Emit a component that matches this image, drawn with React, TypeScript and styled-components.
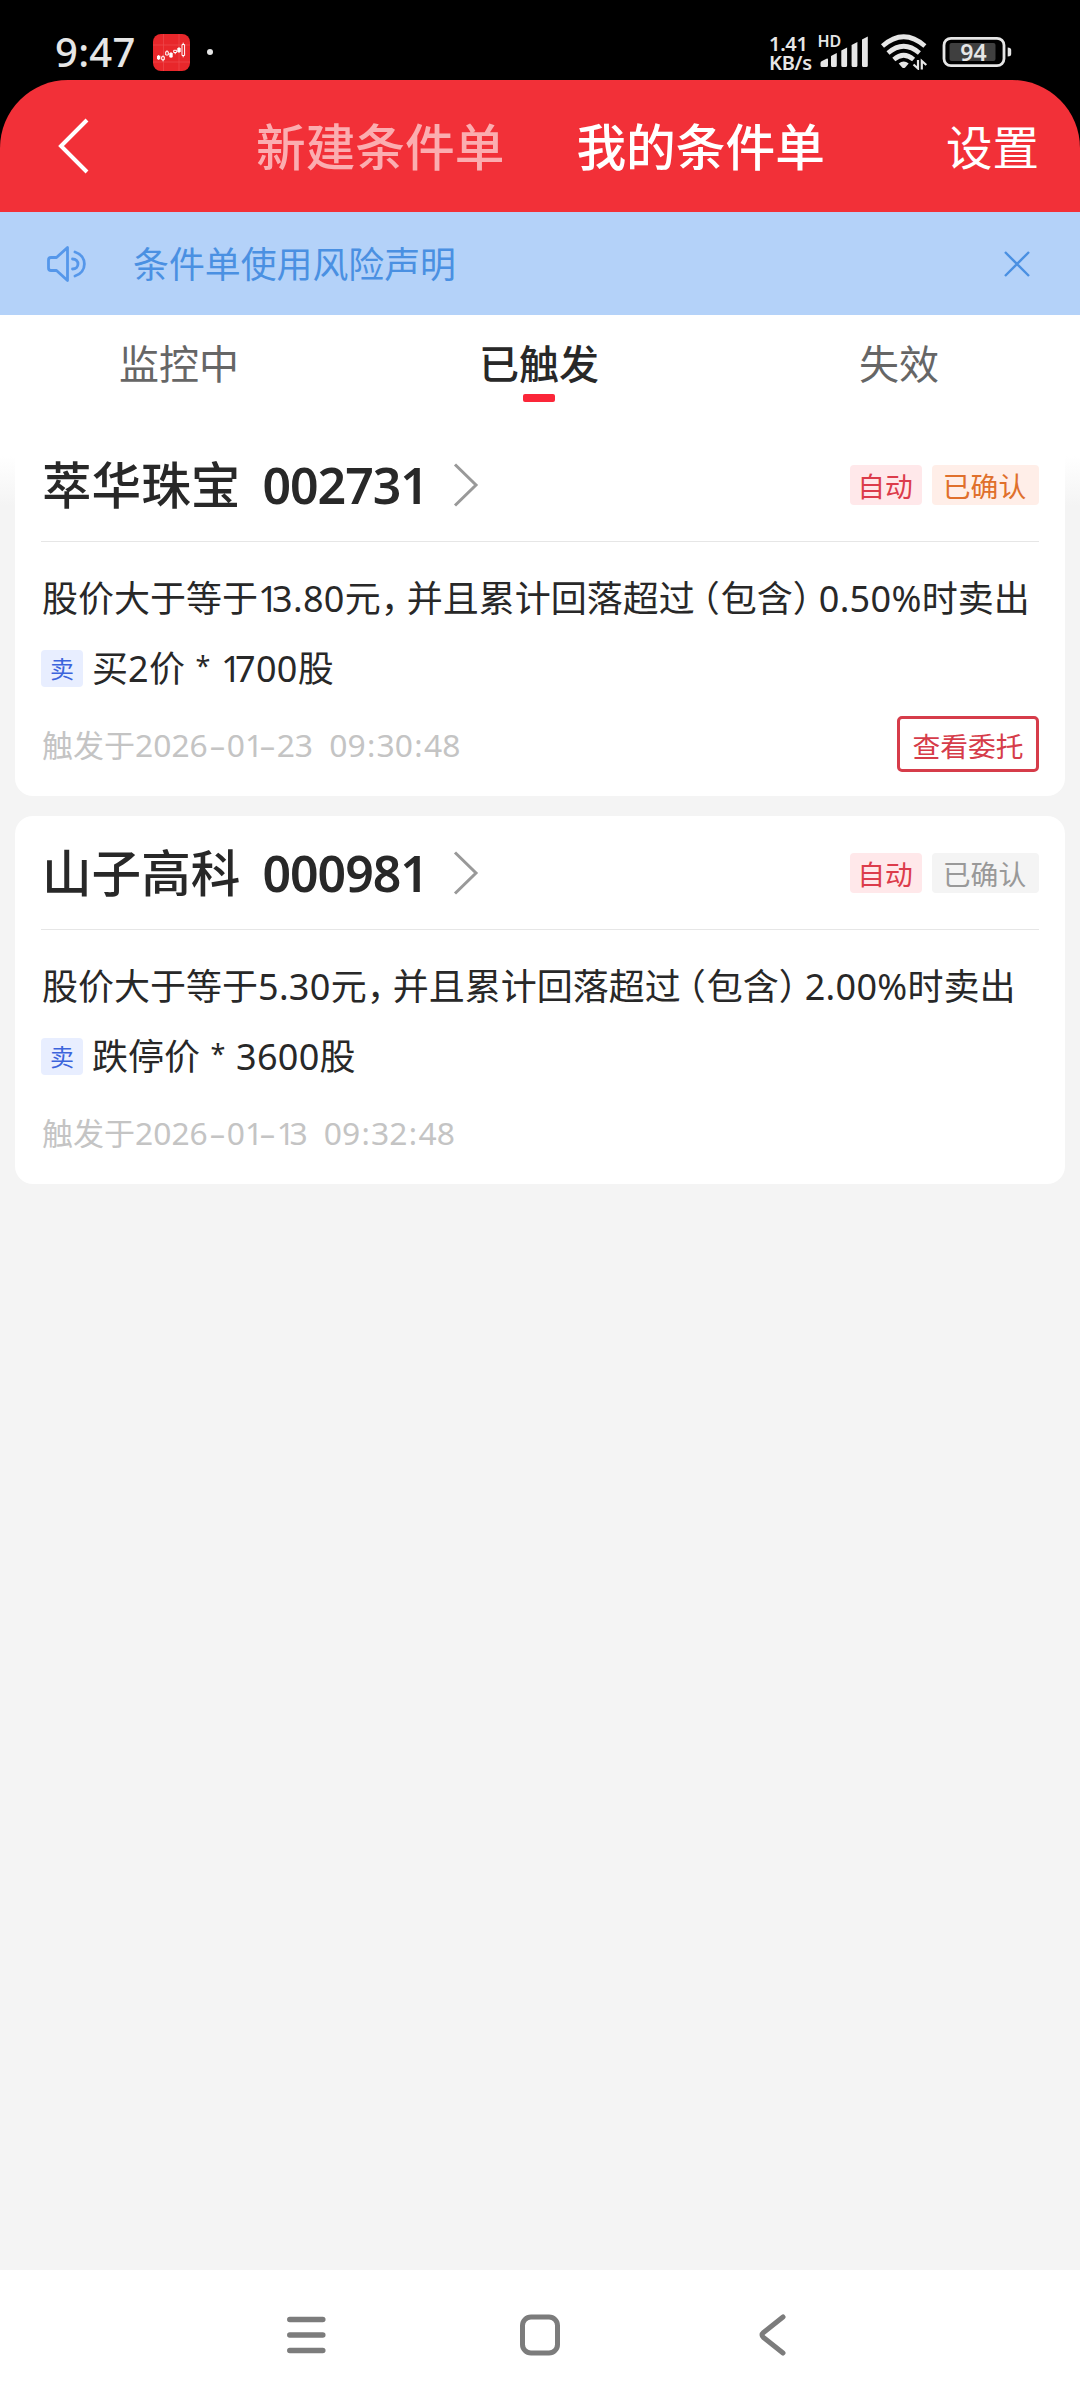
import React from "react";
import styled, { createGlobalStyle } from "styled-components";

const Global = createGlobalStyle`
  * { box-sizing: border-box; }
  body { margin: 0; background: #f4f4f4; }
`;

const Screen = styled.div`
  width: 1080px;
  height: 2400px;
  display: flex;
  flex-direction: column;
  background: #f4f4f4;
  overflow: hidden;
  font-family: "Noto Sans", "Noto Sans CJK SC", sans-serif;
  color: #282828;
  white-space: nowrap;
`;

const Top = styled.div`
  background: #000;
`;

const StatusBar = styled.div`
  height: 80px;
  display: flex;
  align-items: center;
  padding: 24px 68px 0 55px;
  color: #e6e6e6;
`;

const Clock = styled.span`
  width: 98px;
  font-size: 40px;
  font-weight: 500;
  line-height: 56px;
  letter-spacing: 0.3px;
`;

const Spacer = styled.div`
  flex: 1;
`;

const Speed = styled.div`
  display: flex;
  flex-direction: column;
  width: 47px;
  padding-top: 1px;
  font-size: 20px;
  line-height: 19px;
  font-weight: 600;
  letter-spacing: -0.3px;
`;

const Header = styled.div`
  height: 132px;
  display: flex;
  align-items: center;
  padding: 0 41px 0 56px;
  background: #f23038;
  border-radius: 68px 68px 0 0;
`;

const HeaderTabs = styled.div`
  display: flex;
  gap: 72px;
  margin-left: 167px;
  padding-top: 2px;
  flex: 1;
`;

const HeaderTab = styled.span<{ $active?: boolean }>`
  font-size: 49.7px;
  line-height: 72px;
  font-weight: 500;
  color: ${(p) => (p.$active ? "#fff" : "#fbadb0")};
`;

const Settings = styled.span`
  font-size: 46.5px;
  line-height: 72px;
  padding-top: 2px;
  color: #fff;
`;

const Notice = styled.div`
  height: 103px;
  display: flex;
  align-items: center;
  padding: 0 50px 0 45px;
  background: #b4d2f9;
  color: #4a90e2;
`;

const NoticeText = styled.span`
  flex: 1;
  margin-left: 46px;
  padding-top: 2px;
  font-size: 35.9px;
  line-height: 52px;
`;

const Tabs = styled.div`
  height: 113px;
  display: grid;
  grid-template-columns: repeat(3, 1fr);
  background: #fff;
`;

const Tab = styled.div<{ $active?: boolean }>`
  display: flex;
  flex-direction: column;
  align-items: center;
  padding: 19px 2px 0 0;
  font-size: 40px;
  line-height: 60px;
  font-weight: ${(p) => (p.$active ? 500 : 400)};
  color: ${(p) => (p.$active ? "#282828" : "#666")};
`;

const Indicator = styled.i`
  width: 32px;
  height: 8px;
  border-radius: 2px;
  background: #fb2639;
`;

const List = styled.div`
  flex: 1;
  display: flex;
  flex-direction: column;
  gap: 20px;
  padding: 0 15px;
  background: linear-gradient(#fff 28px, #f4f4f4 78px);
`;

const Card = styled.div`
  height: 368px;
  padding: 0 26px;
  border-radius: 18px;
  background: #fff;
`;

const CardHead = styled.div`
  height: 114px;
  display: flex;
  align-items: center;
  border-bottom: 1px solid #e6e6e6;
`;

const StockName = styled.span`
  font-size: 49.6px;
  line-height: 72px;
  font-weight: 500;
  margin: 0 22px 0 1px;
`;

const StockCode = styled.span`
  width: 166px;
  font-size: 50px;
  line-height: 72px;
  font-weight: 600;
  letter-spacing: -1px;
`;

const TagGroup = styled.div`
  display: flex;
  gap: 10px;
  margin-left: auto;
`;

const tones = {
  red: ["#ffe8ea", "#dc3c4b"],
  orange: ["#ffeee8", "#e0702c"],
  grey: ["#f4f4f4", "#999999"],
};

const Tag = styled.span<{ $tone: keyof typeof tones; $w: number }>`
  width: ${(p) => p.$w}px;
  height: 40px;
  border-radius: 4px;
  padding-right: 2px;
  text-align: center;
  font-size: 27.8px;
  line-height: 43px;
  background: ${(p) => tones[p.$tone][0]};
  color: ${(p) => tones[p.$tone][1]};
`;

const Condition = styled.div`
  margin-top: 31px;
  font-size: 36px;
  line-height: 52px;
  padding-left: 1px;
`;

const Digits = styled.span`
  letter-spacing: 0.3px;
`;

const One = styled.span`
  letter-spacing: -6.5px;
`;

const Mark = styled.span<{ $open: boolean }>`
  display: inline-block;
  width: 26px;
  padding: ${(p) => (p.$open ? "0 1px 0 0" : "0")};
  text-align: ${(p) => (p.$open ? "right" : "left")};
  font-feature-settings: "halt";
`;

const Order = styled.div`
  display: flex;
  align-items: center;
  gap: 9px;
  margin-top: 17px;
  height: 52px;
  font-size: 36px;
  line-height: 52px;
`;

const OrderText = styled.span`
  padding-top: 2px;
`;

const Star = styled.span`
  display: inline-block;
  width: 36px;
  text-align: center;
  font-size: 27px;
  line-height: 27px;
  vertical-align: 6px;
`;

const Side = styled.span`
  width: 42px;
  height: 37px;
  border-radius: 4px;
  background: #e8eeff;
  color: #3c64dc;
  font-size: 24px;
  line-height: 38px;
  text-align: center;
`;

const CardFoot = styled.div`
  display: flex;
  align-items: center;
  justify-content: space-between;
  height: 56px;
  margin-top: 22px;
`;

const Time = styled.span`
  font-size: 31px;
  line-height: 46px;
  color: #c4c4c4;
  padding: 1px 0 0 1px;
  white-space: pre;
`;

const TimeDigits = styled.span`
  font-size: 31.8px;
`;

const TimeOne = styled.span`
  font-size: 31.8px;
  letter-spacing: -5.5px;
`;

const Colon = styled.span`
  display: inline-block;
  width: 11px;
  text-align: center;
`;

const Dash = styled.span`
  display: inline-block;
  width: 19px;
  text-align: center;
  transform: scaleX(1.7);
`;

const OrderButton = styled.button`
  width: 142px;
  height: 56px;
  padding: 1px 0 0;
  border: 3px solid #d63c4a;
  border-radius: 5px;
  background: #fff;
  color: #d63c4a;
  font: 400 27.8px/48px "Noto Sans CJK SC", sans-serif;
`;

const NavBar = styled.div`
  height: 130px;
  display: flex;
  align-items: center;
  justify-content: space-between;
  padding: 0 288px 0 286px;
  background: #fff;
`;

function AppIcon() {
  return (
    <svg width="37" height="37" viewBox="0 0 37 37">
      <rect width="37" height="37" rx="8" fill="#e8272b" />
      <path d="M10.500 0v37M26 0v37M0 11h37M0 28h37" stroke="#ee4a4d" strokeWidth=".7" fill="none" />
      <g stroke="#fff" fill="none" strokeWidth="1">
        <path d="M5.700 21v5M10 21.500v1M10 26v1.300M14 16.300v1M18 18v6M22.200 18.700v1.500M26 13v6M30.200 8.700v1.600M30.200 21.700v1.600" />
        <path d="M8.700 22.700h2.600v3h-2.600zM12.700 17.700h2.600v3.300h-2.600zM20.700 16.300h3v2.200h-3zM29 10.500h2.600v11h-2.600z" />
      </g>
      <path d="M4 21.700h3.300v3.600H4zM16.300 19h3.400v4.300h-3.400zM24.300 14h3.400v4h-3.400z" fill="#fff" />
    </svg>
  );
}

function SignalIcon() {
  return (
    <svg width="53" height="46" viewBox="817 30 53 46" fill="#e6e6e6">
      <text x="818.500" y="48.300" fontSize="16" fontWeight="600" fontFamily="Noto Sans">HD</text>
      <path d="M821.500 66.500v-2.500q0-1.500 1.500-2l4.500-2.200q1.500-.6 1.500.8v6q0 1.500-1.500 1.500h-4.500q-1.500 0-1.500-1.600z" />
      <path d="M832 57l5.800-3v12.500q0 1.500-1.500 1.500h-2.800q-1.500 0-1.500-1.500zM842.300 51.500l5.800-3v18q0 1.500-1.500 1.500h-2.800q-1.500 0-1.500-1.500zM852.600 46l5.800-3v23.500q0 1.500-1.500 1.500h-2.800q-1.500 0-1.500-1.500zM863 40.500l5.800-3v29q0 1.500-1.500 1.500h-2.800q-1.500 0-1.500-1.500z" />
    </svg>
  );
}

function WifiIcon() {
  return (
    <svg width="48" height="36" viewBox="881 35 48 36">
      <g fill="none" stroke="#e6e6e6" strokeWidth="4.600">
        <path d="M883.500 47q21.200-18.500 42.400 0M889 54q15.700-13.500 31.400 0M894.800 60.500q9.900-8.500 19.800 0" />
      </g>
      <path d="M899.700 64.500q5-4 10 0l-3.500 4q-1.500 1.200-3 0z" fill="#e6e6e6" />
      <path d="M919 61v8.500l-4.500-4M922.800 70.500v-8.500l4.500 4" fill="none" stroke="#e6e6e6" strokeWidth="2.200" />
    </svg>
  );
}

function BatteryIcon() {
  return (
    <svg width="70" height="32" viewBox="942.500 36 70 32">
      <rect x="944.500" y="38.300" width="60" height="27.400" rx="7" fill="none" stroke="#e6e6e6" strokeWidth="2.800" />
      <rect x="950" y="43" width="46" height="18" rx="2" fill="#3f3f3f" />
      <path d="M1008.200 47.500q3.500 0 3.500 2.500v4q0 2.500-3.500 2.500z" fill="#e6e6e6" />
      <text x="974" y="60.600" fontSize="23" fontWeight="600" fontFamily="Noto Sans" fill="#e6e6e6" textAnchor="middle">94</text>
    </svg>
  );
}

const Gap = styled.i<{ $w: number }>`
  width: ${(p) => p.$w}px;
  flex: none;
`;

const Dot = styled.i`
  width: 6px;
  height: 6px;
  border-radius: 3px;
  margin-left: 17px;
  background: #e6e6e6;
`;

function Chevron() {
  return (
    <svg width="26" height="44" viewBox="0 0 26 44" fill="none" stroke="#999" strokeWidth="3">
      <path d="M2 1.500l21 20.500l-21 20.500" />
    </svg>
  );
}

function Figures({ text }: { text: string }) {
  return (
    <>
      {text.split(/(1)/).map((t, i) =>
        t === "1" ? <One key={i}>1</One> : t && <Digits key={i}>{t}</Digits>
      )}
    </>
  );
}

function RichText({ text }: { text: string }) {
  return (
    <>
      {text.split(/([，（）]| \* |[\d.]+%?)/).map((t, i) => {
        if (/^[，（）]$/.test(t)) return <Mark key={i} $open={t === "（"}>{t}</Mark>;
        if (t === " * ") return <Star key={i}>*</Star>;
        if (/^\d/.test(t)) return <Figures key={i} text={t} />;
        return t;
      })}
    </>
  );
}

function TimeText({ text }: { text: string }) {
  return (
    <Time>
      {text.split(/([-:1]|[02-9]+)/).map((t, i) => {
        if (t === "-") return <Dash key={i}>-</Dash>;
        if (t === ":") return <Colon key={i}>:</Colon>;
        if (t === "1") return <TimeOne key={i}>1</TimeOne>;
        if (/^\d/.test(t)) return <TimeDigits key={i}>{t}</TimeDigits>;
        return t;
      })}
    </Time>
  );
}

type Item = {
  name: string;
  code: string;
  tone: "orange" | "grey";
  condition: string;
  order: string;
  time: string;
  action?: string;
};

const items: Item[] = [
  {
    name: "萃华珠宝",
    code: "002731",
    tone: "orange",
    condition: "股价大于等于13.80元，并且累计回落超过（包含）0.50%时卖出",
    order: "买2价 * 1700股",
    time: "触发于2026-01-23  09:30:48",
    action: "查看委托",
  },
  {
    name: "山子高科",
    code: "000981",
    tone: "grey",
    condition: "股价大于等于5.30元，并且累计回落超过（包含）2.00%时卖出",
    order: "跌停价 * 3600股",
    time: "触发于2026-01-13  09:32:48",
  },
];

export default function App() {
  return (
    <Screen>
      <Global />
      <Top>
        <StatusBar>
          <Clock>9:47</Clock>
          <AppIcon />
          <Dot />
          <Spacer />
          <Speed>
            <span>1.41</span>
            <span>KB/s</span>
          </Speed>
          <SignalIcon />
          <Gap $w={11} />
          <WifiIcon />
          <Gap $w={14} />
          <BatteryIcon />
        </StatusBar>
        <Header>
          <svg width="33" height="56" viewBox="0 0 33 56" fill="none" stroke="#fff" strokeWidth="4">
            <path d="M31 2l-26 26l26 26" />
          </svg>
          <HeaderTabs>
            <HeaderTab>新建条件单</HeaderTab>
            <HeaderTab $active>我的条件单</HeaderTab>
          </HeaderTabs>
          <Settings>设置</Settings>
        </Header>
      </Top>
      <Notice>
        <svg width="42" height="40" viewBox="45 243.500 42 40" fill="none" stroke="#5597ea" strokeWidth="2.800" strokeLinecap="round" strokeLinejoin="round">
          <path d="M48.500 259.500q0-2.500 2.500-2.500h5.500l11-10v33l-11-10h-5.500q-2.500 0-2.500-2.500zM72.500 258.500c7.300 0 7.300 10 0 10M75 251.500c12.500 4 12.500 20 0 24" />
        </svg>
        <NoticeText>条件单使用风险声明</NoticeText>
        <svg width="26" height="26" viewBox="0 0 26 26" fill="none" stroke="#4a90e2" strokeWidth="2.400">
          <path d="M1 1l24 24M25 1l-24 24" />
        </svg>
      </Notice>
      <Tabs>
        <Tab>监控中</Tab>
        <Tab $active>
          已触发
          <Indicator />
        </Tab>
        <Tab>失效</Tab>
      </Tabs>
      <List>
        {items.map((it) => (
          <Card key={it.code}>
            <CardHead>
              <StockName>{it.name}</StockName>
              <StockCode>{it.code}</StockCode>
              <Gap $w={25} />
              <Chevron />
              <TagGroup>
                <Tag $tone="red" $w={72}>自动</Tag>
                <Tag $tone={it.tone} $w={107}>已确认</Tag>
              </TagGroup>
            </CardHead>
            <Condition>
              <RichText text={it.condition} />
            </Condition>
            <Order>
              <Side>卖</Side>
              <OrderText>
                <RichText text={it.order} />
              </OrderText>
            </Order>
            <CardFoot>
              <TimeText text={it.time} />
              {it.action && <OrderButton>{it.action}</OrderButton>}
            </CardFoot>
          </Card>
        ))}
      </List>
      <NavBar>
        <svg width="40" height="44" viewBox="0 0 40 44" stroke="#7c7c7c" strokeWidth="5.500" strokeLinecap="round">
          <path d="M3.800 6.500h33M3.800 22h33M3.800 37.500h33" />
        </svg>
        <svg width="42" height="42" viewBox="1.500 0 42 42" fill="none" stroke="#7c7c7c" strokeWidth="5">
          <rect x="4" y="3" width="35" height="36" rx="8.500" />
        </svg>
        <svg width="36" height="44" viewBox="-1 0 36 44" fill="none" stroke="#7c7c7c" strokeWidth="5" strokeLinecap="round" strokeLinejoin="round">
          <path d="M26 4l-19.500 15.500q-3 2.500 0 5l19.500 15.500" />
        </svg>
      </NavBar>
    </Screen>
  );
}
